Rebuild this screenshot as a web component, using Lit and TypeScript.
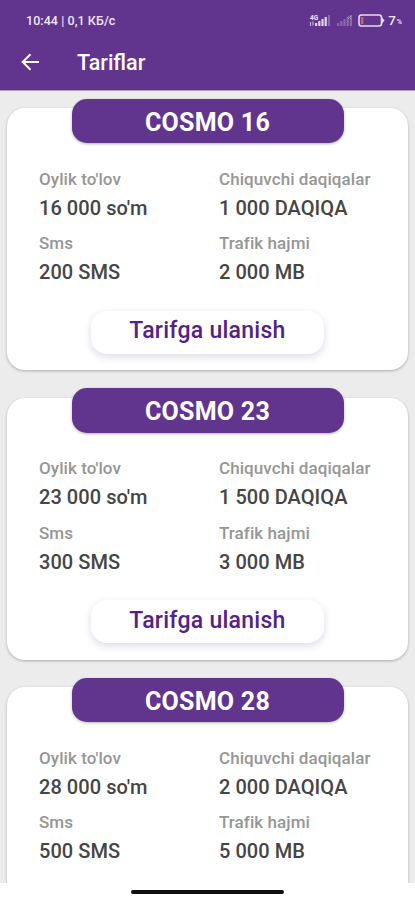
import { LitElement, html, css, svg } from "lit";
import { customElement, property } from "lit/decorators.js";

interface Tariff {
  name: string;
  fee: string;
  minutes: string;
  sms: string;
  traffic: string;
}

const TARIFFS: Tariff[] = [
  { name: "COSMO 16", fee: "16 000 so'm", minutes: "1 000 DAQIQA", sms: "200 SMS", traffic: "2 000 MB" },
  { name: "COSMO 23", fee: "23 000 so'm", minutes: "1 500 DAQIQA", sms: "300 SMS", traffic: "3 000 MB" },
  { name: "COSMO 28", fee: "28 000 so'm", minutes: "2 000 DAQIQA", sms: "500 SMS", traffic: "5 000 MB" },
];

@customElement("status-bar")
class StatusBar extends LitElement {
  static styles = css`
    :host {
      display: flex;
      align-items: center;
      justify-content: space-between;
      height: 40px;
      padding: 0 13px 0 26px;
      color: #eee6f5;
      font-size: 12px;
      font-weight: 500;
    }
    .icons {
      display: flex;
      align-items: center;
    }
    .signal {
      margin-right: 5px;
    }
    .battery {
      margin-right: 3px;
    }
    .level {
      font-size: 13.5px;
      line-height: 14px;
    }
    .percent {
      font-size: 7px;
      font-weight: 700;
      margin: 4px 0 0 1px;
      opacity: 0.95;
    }
    .time {
      font-size: 12.5px;
      letter-spacing: 0.06px;
    }
  `;

  render() {
    const bars = (faint: boolean) =>
      [0, 1, 2, 3, 4].map(
        (i) => svg`<rect x=${6 + i * 3.2} y=${12 - (3 + i * 2)} width="2.2" height=${3 + i * 2}
          fill="#efe6f6" opacity=${faint ? 0.3 : i === 4 ? 0.3 : 0.9}></rect>`,
      );
    return html`
      <span class="time">10:44 | 0,1 КБ/с</span>
      <span class="icons">
        <svg class="signal" width="22" height="13" viewBox="0 0 22 13">
          <text x="1" y="5.5" font-size="6.5" font-weight="700" fill="#efe6f6">4G</text>
          <path d="M1.5 12V8M4 7.5v4" stroke="#efe6f6" stroke-width="1.3" opacity=".65"></path>
          ${bars(false)}
        </svg>
        <svg class="signal" width="17" height="13" viewBox="5 0 17 13">
          ${bars(true)}
          <path d="M17 2l3 3m0-3l-3 3" stroke="#efe6f6" stroke-width="1" opacity=".4"></path>
        </svg>
        <svg class="battery" width="27" height="13" viewBox="0 0 27 13">
          <rect x="1" y="1" width="22.5" height="11" rx="2.5" fill="none" stroke="#e6daf0" stroke-width="1.6"></rect>
          <rect x="2.8" y="3" width="2.6" height="7" fill="#b9685e"></rect>
          <path d="M24 3.5l2.6 3-2.6 3z" fill="#e6daf0"></path>
        </svg>
        <span class="level">7</span><span class="percent">%</span>
      </span>
    `;
  }
}

@customElement("tariff-card")
class TariffCard extends LitElement {
  @property({ attribute: false }) tariff!: Tariff;

  static styles = css`
    :host {
      display: flex;
      flex-direction: column;
      align-items: center;
      flex: none;
      box-sizing: border-box;
      height: 262px;
      background: #fff;
      border-radius: 18px;
      box-shadow: 0 1px 3px rgba(0, 0, 0, 0.28);
    }
    .name {
      flex: none;
      width: 272px;
      height: 44.5px;
      margin-top: -9.5px;
      border-radius: 15px;
      background: #61348e;
      box-shadow: 0 1px 3px rgba(0, 0, 0, 0.3);
      color: #fff;
      font-size: 25px;
      line-height: 47px;
      font-weight: 700;
      letter-spacing: 0.25px;
      text-align: center;
    }
    .facts {
      align-self: stretch;
      display: grid;
      grid-template-columns: 180px 1fr;
      row-gap: 6.5px;
      margin: 23.5px 0 0 32px;
    }
    .label {
      color: #969696;
      font-size: 17px;
      line-height: 24px;
      font-weight: 500;
      letter-spacing: 0.07px;
    }
    .value {
      color: #454545;
      font-size: 20px;
      line-height: 34px;
      font-weight: 500;
      letter-spacing: 0.05px;
    }
    .connect {
      flex: none;
      width: 233px;
      height: 43px;
      margin-top: 21.5px;
      padding: 0 0 2px;
      border: 0;
      border-radius: 16px;
      background: #fff;
      box-shadow: 0 3px 9px rgba(60, 30, 110, 0.17);
      color: #54218a;
      font: 500 23px/38px Roboto, sans-serif;
      letter-spacing: 0.27px;
    }
  `;

  private fact(label: string, value: string) {
    return html`<div>
      <div class="label">${label}</div>
      <div class="value">${value}</div>
    </div>`;
  }

  render() {
    const t = this.tariff;
    return html`
      <div class="name">${t.name}</div>
      <div class="facts">
        ${this.fact("Oylik to'lov", t.fee)} ${this.fact("Chiquvchi daqiqalar", t.minutes)}
        ${this.fact("Sms", t.sms)} ${this.fact("Trafik hajmi", t.traffic)}
      </div>
      <button class="connect">Tarifga ulanish</button>
    `;
  }
}

@customElement("app-root")
class AppRoot extends LitElement {
  static styles = css`
    :host {
      display: flex;
      flex-direction: column;
      height: 900px;
      overflow: hidden;
      background: #fff;
      font-family: Roboto, sans-serif;
    }
    header {
      flex: none;
      height: 90px;
      background: #61348e;
      border-bottom: 1px solid #b79acb;
    }
    .bar {
      display: flex;
      align-items: center;
      height: 44px;
      padding-left: 20px;
      color: #fff;
    }
    .title {
      margin-left: 35px;
      font-size: 21.5px;
      font-weight: 500;
    }
    main {
      flex: 1;
      min-height: 0;
      display: flex;
      flex-direction: column;
      gap: 27.5px;
      padding: 17px 7px 0;
      overflow-y: auto;
      scrollbar-width: none;
      background: #ececec;
    }
    footer {
      flex: none;
      display: flex;
      justify-content: center;
      height: 17px;
    }
    .handle {
      width: 153px;
      height: 4px;
      margin-top: 7px;
      border-radius: 2px;
      background: #111;
    }
  `;

  render() {
    return html`
      <header>
        <status-bar></status-bar>
        <div class="bar">
          <svg width="22" height="20" viewBox="0 0 22 20" fill="none" stroke="#fff" stroke-width="2">
            <path d="M19 10H3M10.5 2.2L2.7 10l7.8 7.8"></path>
          </svg>
          <span class="title">Tariflar</span>
        </div>
      </header>
      <main>${TARIFFS.map((t) => html`<tariff-card .tariff=${t}></tariff-card>`)}</main>
      <footer><div class="handle"></div></footer>
    `;
  }
}
